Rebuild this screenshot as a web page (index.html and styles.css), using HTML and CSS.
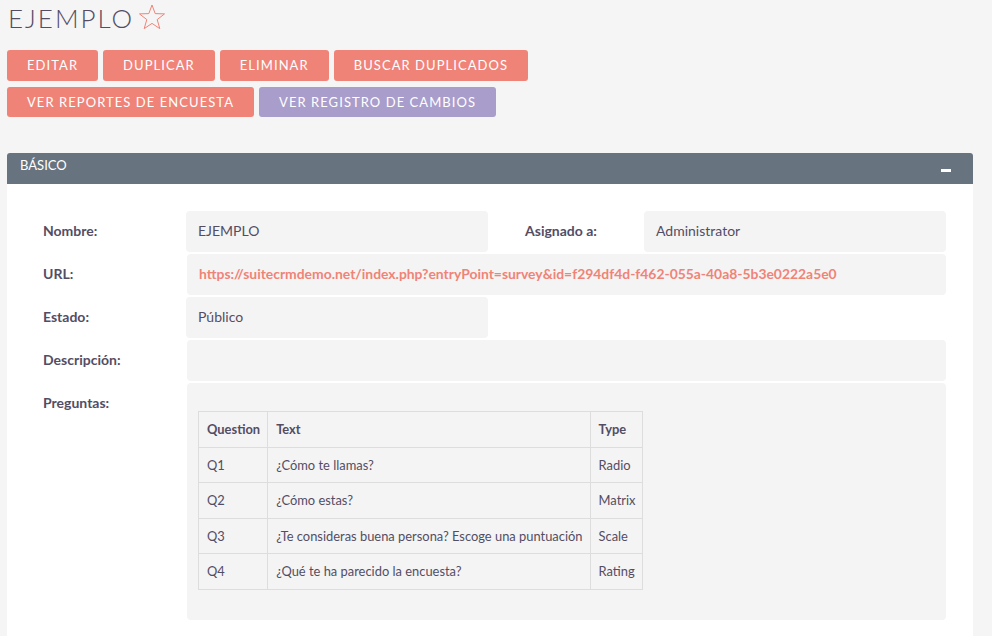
FILE: index.html
```html
<!DOCTYPE html>
<html lang="es">
<head>
    <meta charset="UTF-8">
    <meta name="viewport" content="width=device-width, initial-scale=1.0">
    <title>EJEMPLO</title>
    <link rel="stylesheet" href="styles.css">
</head>
<body>
    <div class="wrap">
        <!-- 제목 -->
        <h1 class="tit">
            EJEMPLO
            <svg class="star" width="28" height="26" viewBox="0 0 28 26">
                <polygon points="14,1 17.2,9.6 26.5,9.9 19.2,15.6 21.8,24.6 14,19.4 6.2,24.6 8.8,15.6 1.5,9.9 10.8,9.6" fill="none" stroke="#f08377" stroke-width="1"/>
            </svg>
        </h1>

        <!-- 버튼 -->
        <div class="btns">
            <a href="#" class="btn">Editar</a>
            <a href="#" class="btn">Duplicar</a>
            <a href="#" class="btn">Eliminar</a>
            <a href="#" class="btn">Buscar duplicados</a>
        </div>
        <div class="btns">
            <a href="#" class="btn">Ver reportes de encuesta</a>
            <a href="#" class="btn purple">Ver registro de cambios</a>
        </div>

        <!-- 패널 -->
        <div class="panel">
            <div class="panelHd">
                <span>BÁSICO</span>
                <span class="minus"></span>
            </div>
            <div class="panelBd">
                <div class="lbl">Nombre:</div>
                <div class="val">EJEMPLO</div>
                <div class="lbl lbl2">Asignado a:</div>
                <div class="val">Administrator</div>

                <div class="lbl">URL:</div>
                <div class="val full"><a href="#" class="link">https://suitecrmdemo.net/index.php?entryPoint=survey&amp;id=f294df4d-f462-055a-40a8-5b3e0222a5e0</a></div>

                <div class="lbl">Estado:</div>
                <div class="val">Público</div>
                <div class="empty"></div>

                <div class="lbl">Descripción:</div>
                <div class="val full"></div>

                <div class="lbl">Preguntas:</div>
                <div class="val full qbox">
                    <table class="qtbl">
                        <tr><th>Question</th><th>Text</th><th>Type</th></tr>
                        <tr><td>Q1</td><td>¿Cómo te llamas?</td><td>Radio</td></tr>
                        <tr><td>Q2</td><td>¿Cómo estas?</td><td>Matrix</td></tr>
                        <tr><td>Q3</td><td>¿Te consideras buena persona? Escoge una puntuación</td><td>Scale</td></tr>
                        <tr><td>Q4</td><td>¿Qué te ha parecido la encuesta?</td><td>Rating</td></tr>
                    </table>
                </div>
            </div>
        </div>
    </div>
</body>
</html>
```

FILE: styles.css
```css
/* 초기화 */
html, body{
    margin: 0;
    padding: 0;
}
body{
    background: #f5f5f5;
    font-family: Lato, "Liberation Sans", sans-serif;
    color: #534d64;
    overflow: hidden;
}
a{
    text-decoration: none;
}

.wrap{
    padding: 0 19px 0 7px;
}

/* 제목 */
.tit{
    display: flex;
    align-items: center;
    margin: 0 0 14px;
    padding-left: 1px;
    height: 36px;
    font-size: 26px;
    font-weight: 300;
    letter-spacing: 2px;
    line-height: 36px;
    color: #534d64;
}
.star{
    margin-left: 4px;
    margin-top: -3px;
}

/* 버튼 */
.btns{
    display: flex;
    gap: 5px;
    margin-bottom: 6px;
}
.btn{
    display: block;
    height: 31px;
    padding: 0 20px;
    border-radius: 3px;
    background: #f08377;
    color: #fff;
    font-size: 13px;
    letter-spacing: 1.06px;
    line-height: 31px;
    text-transform: uppercase;
}
.btn.purple{
    background: #a99dcb;
}
.btns + .btns .btn{
    height: 30px;
    line-height: 30px;
}

/* 패널 */
.panel{
    margin-top: 36px;
}
.panelHd{
    display: flex;
    justify-content: space-between;
    align-items: center;
    height: 31px;
    padding: 0 22px 0 13px;
    border-radius: 3px 3px 0 0;
    background: #677480;
    color: #fff;
    font-size: 13px;
}
.panelHd span:first-child{
    margin-top: -7px;
}
.minus{
    width: 10px;
    height: 3px;
    margin-top: 4px;
    background: #fff;
}

.panelBd{
    display: grid;
    grid-template-columns: 179px 302px 156px 302px;
    row-gap: 2px;
    padding: 27px 27px 40px 0;
    background: #fff;
}
.lbl{
    padding: 10px 0 0 36px;
    font-size: 14px;
    font-weight: bold;
    line-height: 19px;
}
.lbl2{
    padding-left: 37px;
}
.val{
    min-height: 41px;
    box-sizing: border-box;
    padding: 10px 12px 12px;
    border-radius: 4px;
    background: #f4f4f4;
    font-size: 14px;
    line-height: 19px;
}
.val.full{
    grid-column: 2 / 5;
    margin-left: 1px;
}
.empty{
    grid-column: 3 / 5;
}
.link{
    color: #f08377;
    font-size: 13.9px;
    font-weight: bold;
}

/* 질문 테이블 */
.qbox{
    height: 237px;
    padding: 28px 11px;
}
.qtbl{
    border-collapse: collapse;
    font-size: 12.9px;
    line-height: 18.6px;
    color: #534d64;
}
.qtbl th, .qtbl td{
    padding: 8px 7px 8px 8px;
    border: 1px solid #dddddd;
    text-align: left;
    white-space: nowrap;
}
.qtbl th{
    font-weight: bold;
}
```
